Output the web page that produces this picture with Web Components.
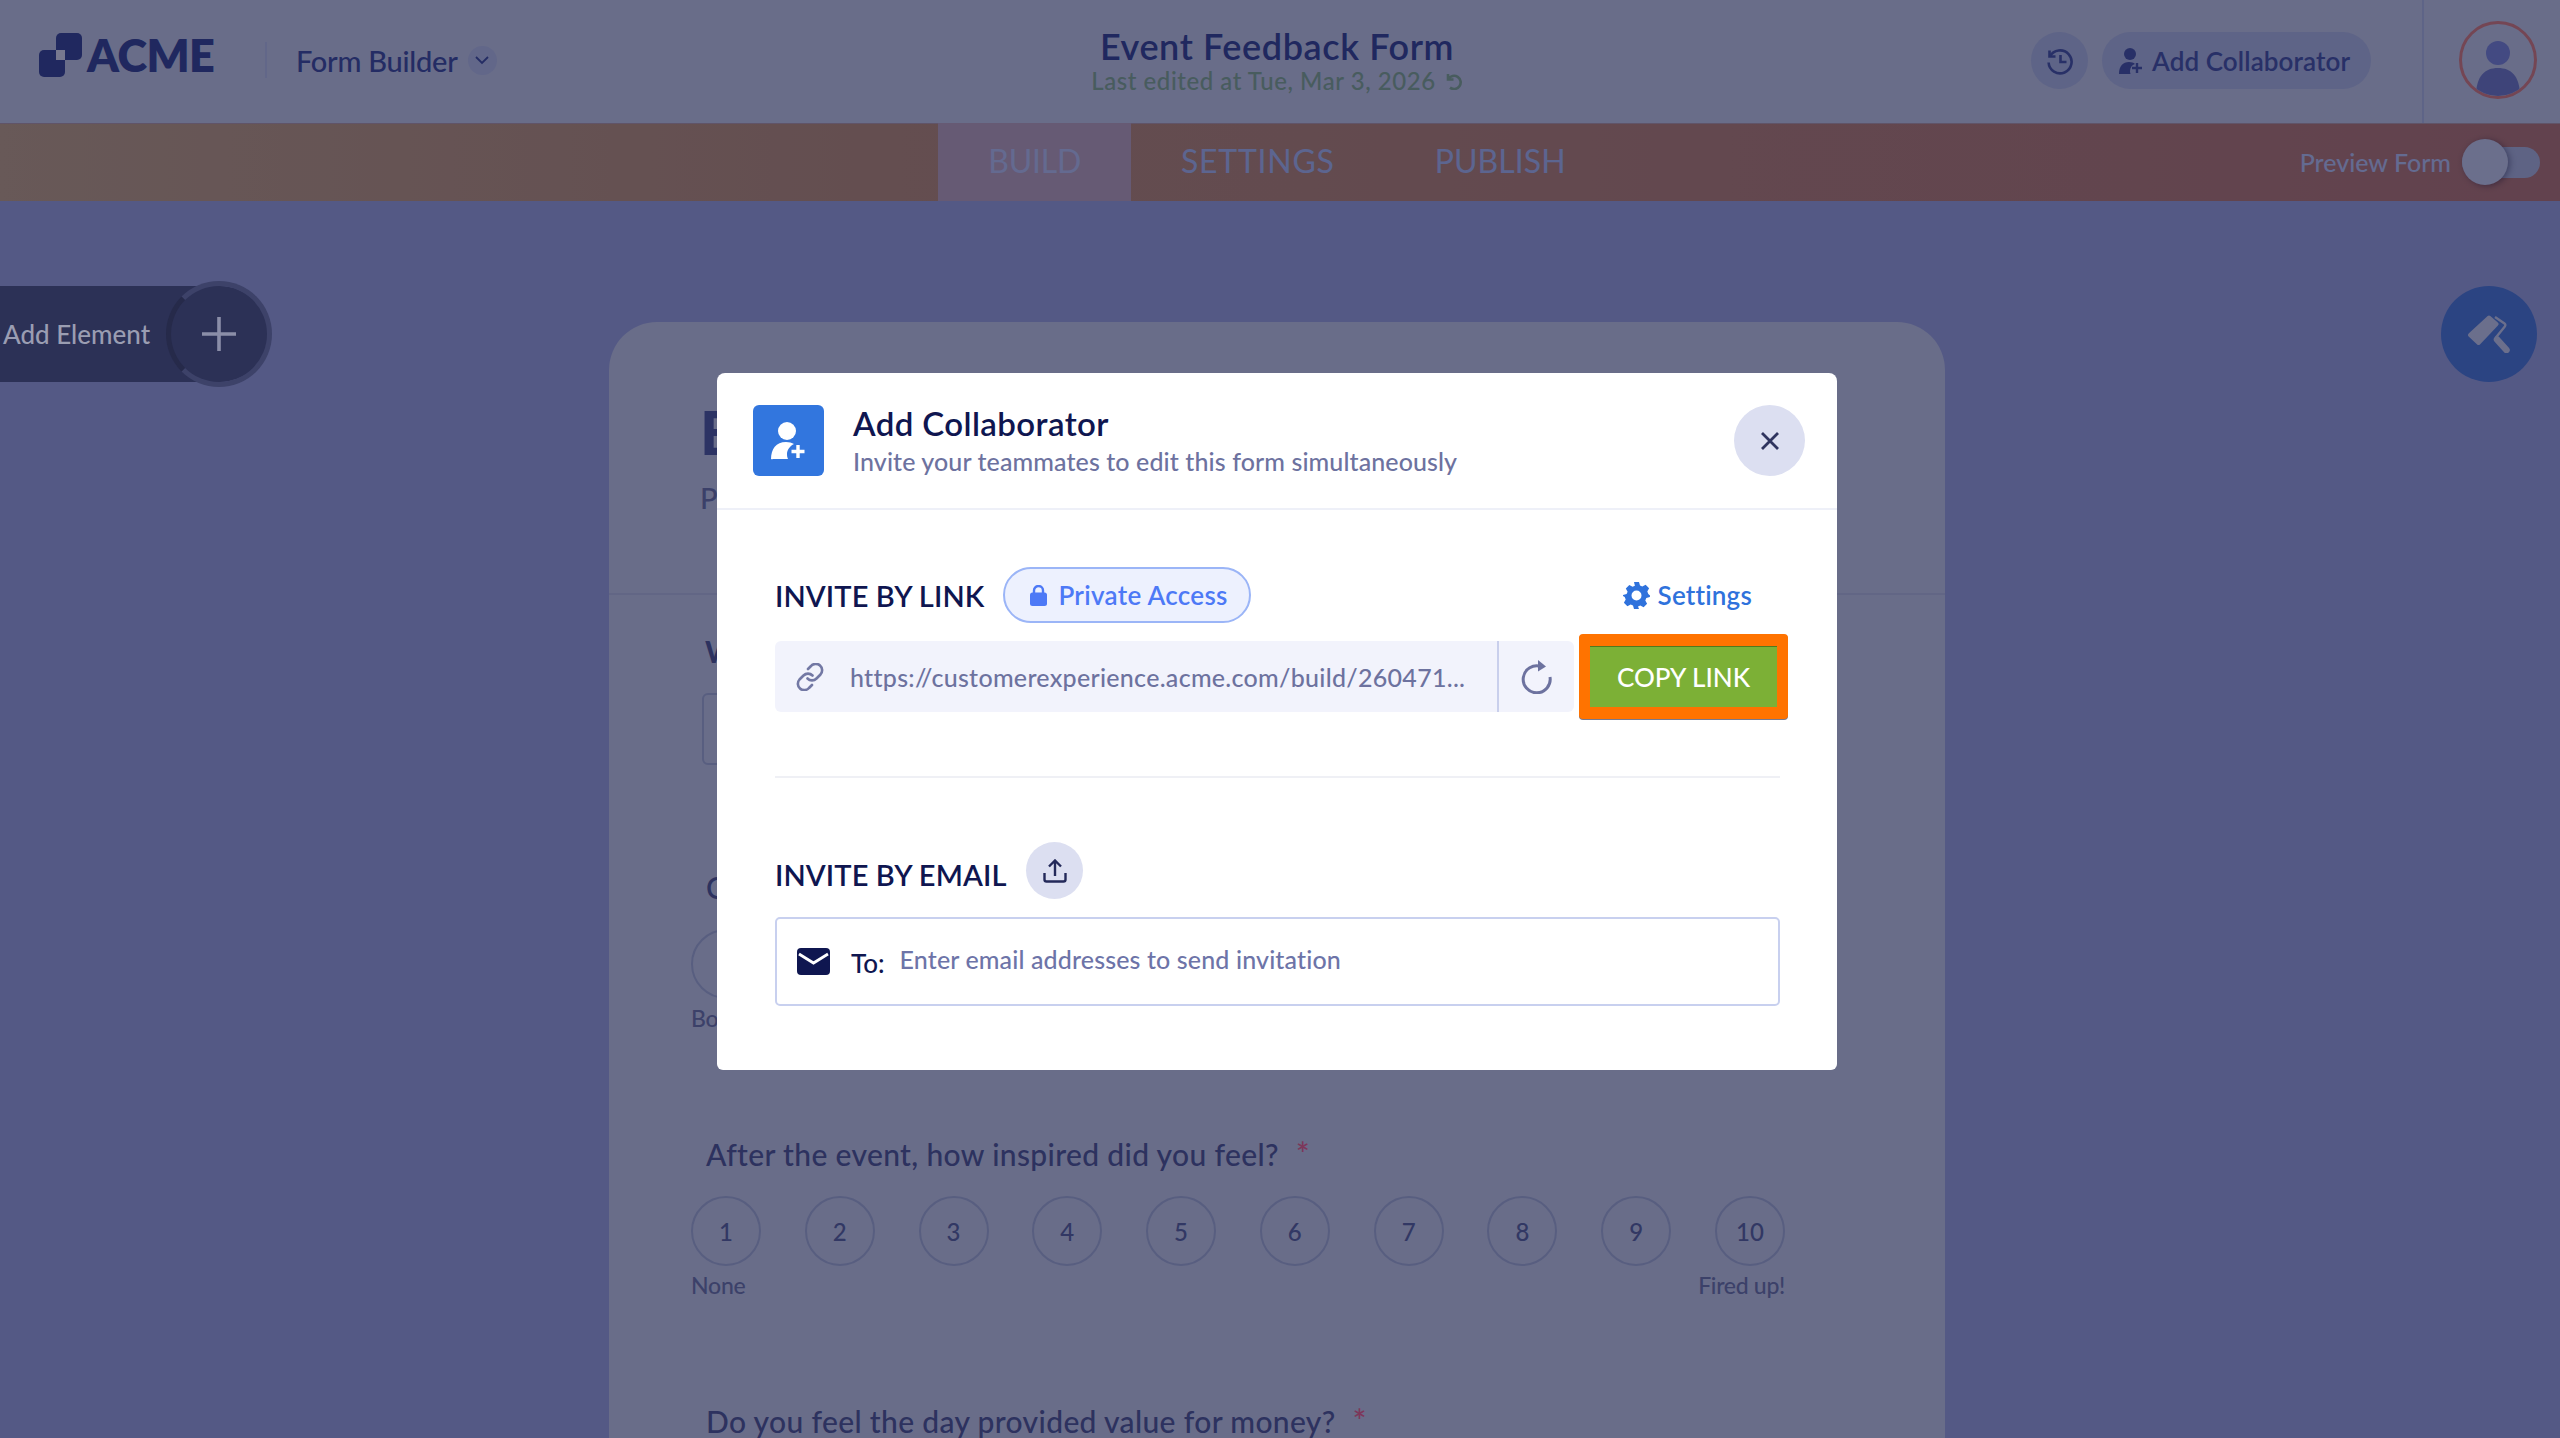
<!DOCTYPE html>
<html lang="en"><head><meta charset="utf-8"><title>Add Collaborator</title>
<style>
html,body{margin:0;padding:0}
body{width:2560px;height:1438px;overflow:hidden;position:relative;background:#a8b2e2;font-family:Lato,"Noto Sans",sans-serif;font-weight:500;--ink:#0f1650}
</style></head><body>
<form-header></form-header>
<tab-bar></tab-bar>
<form-stage>
  <add-element></add-element>
  <form-card></form-card>
  <paint-fab></paint-fab>
</form-stage>
<modal-scrim><collab-modal></collab-modal></modal-scrim>
<script>
const def=(n,html,init)=>customElements.define(n,class extends HTMLElement{constructor(){super();this.attachShadow({mode:'open'}).innerHTML=html;init&&init(this)}});

def('form-header',`<style>
:host{display:grid;grid-template-columns:1fr auto 1fr;align-items:center;height:123px;width:2554px;padding-right:6px;background:#d2daea}
.l,.r{display:flex;align-items:center}
.l{padding-left:39px;height:123px}
.l svg.m{margin-bottom:13px}
.acme{font-size:45px;font-weight:800;color:#405096;margin:0 0 13px 5px;width:132px;letter-spacing:-.5px}
.sep{width:2px;height:36px;background:#c4ceea;margin:0 29px 3px 46px}
.fb{font-size:29px;color:#4858a0;letter-spacing:-.25px;margin-bottom:3px}
.chev{width:29px;height:29px;border-radius:50%;background:#c4ceea;margin:0 0 2px 10px;display:flex;align-items:center;justify-content:center}
.c{text-align:center;padding-bottom:5px}
.t{font-size:36px;line-height:44px;font-weight:600;color:#405096;letter-spacing:.6px}
.e{font-size:24px;line-height:26px;color:#90b894;display:flex;align-items:center;gap:9px;letter-spacing:.55px;font-weight:500}
.r{justify-content:flex-end;padding-right:17px;height:123px}
.h{width:57px;height:57px;border-radius:50%;background:#bcc8e6;display:flex;align-items:center;justify-content:center;margin-bottom:2px}
.b{height:57px;width:269px;box-sizing:border-box;border-radius:29px;background:#bcc8e6;margin:0 0 2px 14px;display:flex;align-items:center;padding-left:17px;gap:9px;font-size:26px;font-weight:600;color:#5060a6;letter-spacing:.1px}
.d{width:2px;height:123px;background:#bcc8e6;margin:0 35px 0 51px}
.a{width:78px;height:78px;box-sizing:border-box;border:3px solid #e88c80;border-radius:50%;overflow:hidden;display:flex;margin-bottom:3px}
</style>
<div class="l"><svg class="m" width="43" height="44" viewBox="0 0 43 44"><rect x="17" width="26" height="27" rx="5" fill="#405096"/><rect y="17" width="26" height="27" rx="5" fill="#405096"/><rect x="17" y="17" width="9" height="10" fill="#eef0f6"/></svg>
<span class="acme">ACME</span><span class="sep"></span><span class="fb">Form Builder</span>
<span class="chev"><svg width="14" height="9" viewBox="0 0 14 9"><path d="M1 1l6 6 6-6" fill="none" stroke="#4858a0" stroke-width="1.8"/></svg></span></div>
<div class="c"><div class="t">Event Feedback Form</div><div class="e"><span>Last edited at Tue, Mar 3, 2026</span><svg width="18" height="18" viewBox="0 0 18 18"><path d="M3 2v5.500h5.500M3.400 7A6.600 6.600 0 1 1 5 15.600" fill="none" stroke="#90b894" stroke-width="2.600"/></svg></div></div>
<div class="r"><span class="h"><svg width="28" height="28" viewBox="0 0 28 28" fill="none" stroke="#5060a6" stroke-width="2.6"><path d="M3.5 3.5v6h6"/><path d="M3.9 9.5A11.5 11.5 0 1 1 2.6 15.5"/><path d="M14.5 8v7h6"/></svg></span>
<span class="b"><svg width="24" height="26" viewBox="0 0 24 26" fill="#5060a6"><circle cx="11" cy="6" r="6"/><path d="M0 26c0-8 4-12 10-12 2.500 0 4.500.7 6 1.900-3 1-5 3.600-5 7.100 0 1 .2 2 .5 3z"/><path d="M18 15v10M13 20h10" stroke="#5060a6" stroke-width="2.400"/></svg><span>Add Collaborator</span></span>
<span class="d"></span>
<span class="a"><svg width="72" height="72" viewBox="0 0 72 72"><circle cx="36" cy="29" r="12" fill="#8694dc"/><path d="M14 72c0-20 9-28 22-28s22 8 22 28z" fill="#7c88ca"/></svg></span></div>`);

def('tab-bar',`<style>
:host{display:grid;grid-template-columns:1fr auto 1fr;align-items:center;height:78px;width:2554px;padding-right:6px;background:linear-gradient(90deg,#d0b288 0,#c89c78 35%,#c48474 100%);box-shadow:inset 0 1px #c0a8a8}
.tabs{display:flex;height:78px}
.tabs span{display:flex;align-items:center;font-size:32px;color:#b8caf8;padding:0 50px 3px;letter-spacing:.75px;font-weight:400}
.tabs .on{background:#ccb4c0;color:#c8d4f8;letter-spacing:-.25px}
.tabs .pb{letter-spacing:.05px}
.p{grid-column:3;display:flex;align-items:center;justify-content:flex-end;padding-right:14px;font-size:25px;color:#c8d6fa}
.t{width:78px;height:46px;position:relative;margin-left:11px;display:flex;align-items:center}
.t i{display:block;width:100%;height:31px;border-radius:16px;background:#bcc6e0}
.t b{position:absolute;left:0;top:0;width:46px;height:46px;border-radius:50%;background:#d6def0;box-shadow:2px 1px 6px rgba(0,0,30,.35)}
</style><span></span><div class="tabs"><span class="on">BUILD</span><span>SETTINGS</span><span class="pb">PUBLISH</span></div>
<div class="p"><span>Preview Form</span><span class="t"><i></i><b></b></span></div>`);

def('form-stage',`<style>
:host{display:block;width:2554px;height:1237px;overflow:hidden;position:relative}
</style><slot></slot>`);

def('add-element',`<style>
:host{position:absolute;left:0;top:85px;z-index:10;display:flex;align-items:center;height:96px;width:268px;background:#2c3156;border-radius:0 48px 48px 0;color:#9a9db2;font-size:26px}
span{padding-left:3px}
i{position:absolute;left:166px;top:-5px;width:106px;height:106px;box-sizing:border-box;border-radius:50%;border:5px solid #3d4269;border-left-color:#262a4a;display:flex;align-items:center;justify-content:center}
</style><span>Add Element</span><i><svg width="34" height="34" viewBox="0 0 34 34"><path d="M17 0v34M0 17h34" stroke="#8b8ea8" stroke-width="3.600"/></svg></i>`);

def('paint-fab',`<style>
:host{position:absolute;left:2441px;top:85px;width:96px;height:96px;border-radius:50%;background:#5688dc;display:flex;align-items:center;justify-content:center}
</style><svg width="42" height="38" viewBox="0 0 42 38"><path d="M2 20L21 2.500 28.500 9 10.500 28z" fill="#d6def0" stroke="#d6def0" stroke-width="4" stroke-linejoin="round"/><path d="M27 2l9.500 6.500a2 2 0 0 1 .3 3L27.500 23" fill="none" stroke="#d6def0" stroke-width="2.400"/><path d="M29 24.500l9.500 10.500" stroke="#d6def0" stroke-width="6.500" stroke-linecap="round"/></svg>`);

def('rating-scale',`<style>
:host{display:block;--line:#b0bcd8}
.q{font-size:30px;line-height:40px;color:#5a6496;padding-left:15px;letter-spacing:.35px}
.q b{color:#fa6e8c;font-weight:500;margin-left:17px;font-size:33px}
.row{display:flex;justify-content:space-between;margin-top:22px;width:1094px}
.row span{box-sizing:border-box;width:70px;height:70px;border:2px solid var(--line);border-radius:50%;display:flex;align-items:center;justify-content:center;font-size:24px;color:#6470a0}
.ends{display:flex;justify-content:space-between;width:1094px;font-size:23px;line-height:30px;color:#7882aa;margin-top:4px}
.ends span:first-child{letter-spacing:-.2px}
.ends span:last-child{letter-spacing:-.3px}
</style><div class="q"></div><div class="row"></div><div class="ends"><span></span><span></span></div>`,el=>{
  queueMicrotask(()=>{
    const s=el.shadowRoot,blank=el.hasAttribute('blank');
    s.querySelector('.q').innerHTML=el.getAttribute('q')+(el.hasAttribute('req')?'<b>*</b>':'');
    const r=s.querySelector('.row');
    if(el.hasAttribute('numbered')){for(let i=1;i<=10;i++){const c=document.createElement('span');c.textContent=blank?'':i;r.append(c)}}
    else r.remove();
    const e=s.querySelectorAll('.ends span');
    e[0].textContent=el.getAttribute('lo')||'';e[1].textContent=el.getAttribute('hi')||'';
    if(!el.hasAttribute('numbered'))s.querySelector('.ends').remove();
  });
});

def('form-card',`<style>
:host{display:block;width:1336px;box-sizing:border-box;margin:121px auto 0;background:#d2daea;border-radius:48px 48px 0 0;height:1200px}
.head{padding:80px 0 75px 91px;border-bottom:2px solid #c4cce2}
.ti{font-size:60px;line-height:60px;font-weight:900;color:#5866a0}
.su{font-size:29px;line-height:40px;margin-top:16px;color:#7680aa}
.body{padding:36px 0 0 82px}
.w{font-size:30px;line-height:40px;color:#5a6496;padding-left:14px;font-weight:700}
.in{box-sizing:border-box;width:1070px;height:72px;margin:22px 0 102px 11px;border:2px solid #b0bcd8;border-radius:6px}
rating-scale{margin-bottom:100px}
</style>
<div class="head"><div class="ti">E</div><div class="su">P</div></div>
<div class="body"><div class="w">W</div><div class="in"></div>
<rating-scale q="C" numbered blank lo="Bo"></rating-scale>
<rating-scale q="After the event, how inspired did you feel?" req numbered lo="None" hi="Fired up!"></rating-scale>
<rating-scale q="Do you feel the day provided value for money?" req></rating-scale></div>`);

def('modal-scrim',`<style>
:host{position:absolute;inset:0;z-index:5;background:rgba(0,0,40,.5);box-sizing:border-box;padding:373px 0 0 717px}
</style><slot></slot>`);

def('collab-modal',`<style>
:host{display:block;width:1120px;height:697px;background:#fff;border-radius:8px 8px 6px 6px;color:#0f1650}
.hd{display:flex;align-items:center;height:135px;padding:0 32px 0 36px;border-bottom:2px solid #eef0f8}
.ic{width:71px;height:71px;border-radius:6px;background:#3276de;display:flex;align-items:center;justify-content:center;flex:none}
.tx{margin-left:29px;flex:1}
.tt{font-size:33px;line-height:36px;font-weight:600;letter-spacing:.4px;margin-top:2px}
.st{font-size:25px;line-height:36px;color:#6d729f;letter-spacing:.1px;margin-top:2px}
.x{width:71px;height:71px;border-radius:50%;background:#dcdff1;display:flex;align-items:center;justify-content:center}
.bd{padding:57px 57px 0 58px}
.r1{display:flex;align-items:center;height:56px}
.lb{font-size:29px;font-weight:600;letter-spacing:.1px}
.pill{box-sizing:border-box;height:56px;width:248px;margin-left:19px;border:2px solid #9bb5f7;border-radius:28px;background:#edf1fe;color:#4d79f6;display:flex;align-items:center;padding-left:25px;gap:11px;font-size:26px;font-weight:600;letter-spacing:.3px}
.set{margin-left:auto;margin-right:28px;display:flex;align-items:center;gap:8px;color:#2f72dc;font-size:26px;font-weight:600;letter-spacing:.2px}
.r2{display:flex;align-items:center;margin:11px -8px 0 0;height:85px}
.fld{width:799px;height:71px;border-radius:6px;background:#f2f3fc;display:flex;align-items:center;color:#6d729f;font-size:25px;letter-spacing:.29px}
.fld .lk{margin-left:21px;flex:none}
.fld .u{margin-left:26px;flex:1;white-space:nowrap}
.fld .re{width:77px;height:71px;border-left:2px solid #c9cfec;display:flex;align-items:center;justify-content:center;flex:none;box-sizing:border-box}
.copy{box-sizing:border-box;margin-left:5px;width:209px;height:85px;border:solid #ff7300;border-width:12px 11px;border-radius:4px;background:#7cb036;box-shadow:inset 0 1px #4f7a1e,0 1px #77798f;color:#fff;font-size:26px;display:flex;align-items:center;justify-content:center}
hr{border:0;height:2px;background:#eff0f5;margin:57px 0 64px}
.r3{display:flex;align-items:center;height:57px}
.r3 .lb{margin-top:7px}
.up{width:57px;height:57px;border-radius:50%;background:#dcdff1;margin-left:20px;display:flex;align-items:center;justify-content:center}
.em{box-sizing:border-box;height:89px;margin-top:18px;border:2px solid #c8d0ef;border-radius:5px;display:flex;align-items:center;padding-left:20px}
.to{margin-left:21px;font-size:26px;margin-top:2px}
.ph{margin-left:15px;font-size:25px;color:#6d74a8;letter-spacing:.13px;margin-top:-6px}
</style>
<div class="hd"><span class="ic"><svg width="36" height="38" viewBox="0 0 36 38" fill="#fff"><circle cx="16" cy="9" r="9"/><path d="M0 37c0-10 5-17 15-17 3 0 6 .7 8 2-4 2-7 6-7 10 0 2 .3 3.500 1 5H2a2 2 0 0 1-2 0z"/><path d="M27 23v13M20.500 29.500h13" stroke="#fff" stroke-width="3.400"/></svg></span>
<div class="tx"><div class="tt">Add Collaborator</div><div class="st">Invite your teammates to edit this form simultaneously</div></div>
<span class="x"><svg width="18" height="18" viewBox="0 0 18 18"><path d="M1 1l16 16M17 1L1 17" stroke="#2f345f" stroke-width="2.800"/></svg></span></div>
<div class="bd">
<div class="r1"><span class="lb">INVITE BY LINK</span><span class="pill"><svg width="17" height="21" viewBox="0 0 17 21"><path d="M4 8V5.500a4.500 4.500 0 0 1 9 0V8" fill="none" stroke="#4d79f6" stroke-width="2.400"/><rect y="7.500" width="17" height="13.500" rx="2.500" fill="#4d79f6"/></svg><span>Private Access</span></span>
<span class="set"><svg width="27" height="27" viewBox="0 0 27 27"><path fill="#2f72dc" fill-rule="evenodd" d="M11 0h5l1 3.600 2.300 1 3.300-1.800 3.500 3.500-1.800 3.300 1 2.300L27 13.500v0l-.1 1.600-3.600 1-1 2.300 1.800 3.300-3.500 3.500-3.300-1.800-2.300 1L16 27h-5l-1-3.600-2.300-1-3.300 1.800L.9 20.700l1.800-3.300-1-2.300L0 14v-1l3.600-1 1-2.300-1.800-3.300 3.500-3.500 3.300 1.800 2.300-1zM13.500 8.500a5 5 0 1 0 0 10 5 5 0 0 0 0-10z"/></svg><span>Settings</span></span></div>
<div class="r2"><div class="fld"><svg class="lk" width="28" height="28" viewBox="0 0 28 28" fill="none" stroke="#7378a4" stroke-width="2.600" stroke-linecap="round"><path d="M12 6l3-3a6.300 6.300 0 0 1 9.500 8.500l-4 4a6.300 6.300 0 0 1-9 0"/><path d="M16 22l-3 3a6.300 6.300 0 0 1-9.500-8.500l4-4a6.300 6.300 0 0 1 9 0"/></svg><span class="u">https://customerexperience.acme.com/build/260471...</span><span class="re"><svg width="32" height="34" viewBox="0 0 32 34" fill="none"><path d="M20 6.500A13.500 13.500 0 1 0 29 17" stroke="#6d729f" stroke-width="3"/><path d="M17 0l8 6.500-8 5" fill="#6d729f"/></svg></span></div><div class="copy">COPY LINK</div></div>
<hr>
<div class="r3"><span class="lb">INVITE BY EMAIL</span><span class="up"><svg width="24" height="24" viewBox="0 0 24 24" fill="none" stroke="#23295a" stroke-width="2.400"><path d="M12 17V2M6 7.500L12 1.500l6 6"/><path d="M1.500 14v6.500a2 2 0 0 0 2 2h17a2 2 0 0 0 2-2V14"/></svg></span></div>
<div class="em"><svg width="33" height="27" viewBox="0 0 33 27"><rect width="33" height="27" rx="4" fill="#0f1650"/><path d="M2 6l14.500 9L31 6" fill="none" stroke="#fff" stroke-width="2.800"/></svg><span class="to">To:</span><span class="ph">Enter email addresses to send invitation</span></div>
</div>`);
</script></body></html>
